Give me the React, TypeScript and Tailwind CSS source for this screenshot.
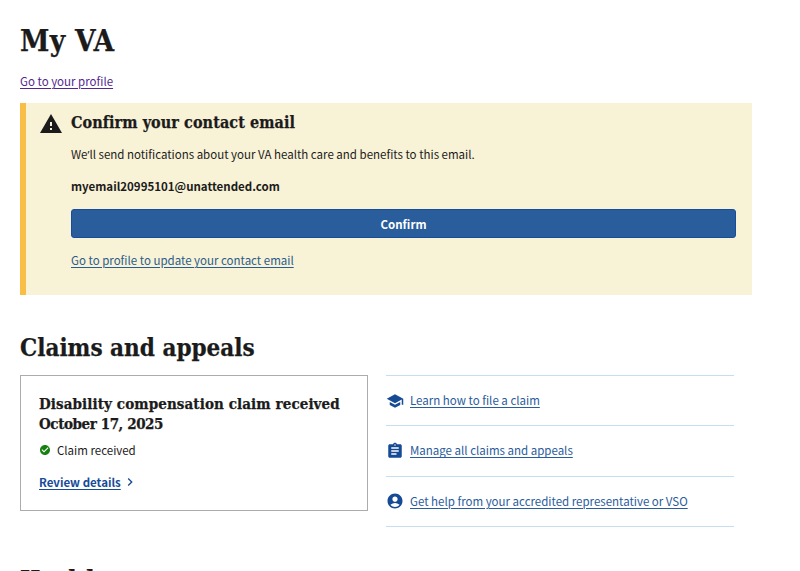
import React from "react";
import { MdAccountCircle, MdAssignment, MdCheckCircle, MdChevronRight, MdSchool, MdWarning } from "react-icons/md";

const serif = "font-['DejaVu_Serif_Condensed','DejaVu_Serif',serif] font-bold text-[#1b1b1b] whitespace-nowrap [-webkit-text-stroke:0.25px_#1b1b1b]";
const link = "underline decoration-1 underline-offset-2 whitespace-nowrap";

function Resource({ icon, children }: { icon: React.ReactNode; children: string }) {
  return (
    <li className="flex h-[50.3px] items-center border-b border-[#c3dff0] text-[#2a5c9c]">
      <span className="w-6 shrink-0 text-[#174a95]">{icon}</span>
      <a className={`${link} -mt-px`}>{children}</a>
    </li>
  );
}

export default function App() {
  return (
    <main className="h-[571px] overflow-hidden bg-white pl-5 pt-[21px] font-['Noto_Sans_CJK_SC',sans-serif] text-[11.5px] leading-5 text-[#1b1b1b]">
      <h1 className={`${serif} h-10 text-[29.5px] leading-10 tracking-[0.3px]`}><span>My VA</span></h1>
      <div className="mt-[10px] h-5 text-[#54278f]">
        <a className={link}>Go to your profile</a>
      </div>

      <section className="mt-[12px] flex h-[192px] w-[732px] border-l-[6px] border-[#f9be48] bg-[#f8f2d6] pl-[14px] pr-4 pt-[7px]">
        <MdWarning className="mt-[1.5px] size-6 shrink-0 -ml-px" />
        <div className="ml-2 flex-1">
          <h2 className={`${serif} h-[25px] text-[16px] leading-[25px] tracking-[0.08px]`}><span>Confirm your contact email</span></h2>
          <p className="mt-[9px] h-5 whitespace-nowrap"><span>We<span className="font-['Open_Sans',sans-serif]">’</span>ll send notifications about your VA health care and benefits to this email.</span></p>
          <p className="mt-3 font-bold"><span>myemail20995101@unattended.com</span></p>
          <button className="mt-[13px] flex h-[29px] w-full items-center justify-center rounded-[3px] border border-[#174e9c] bg-[#295d9c] font-bold text-white">
            <span>Confirm</span>
          </button>
          <div className="mt-3 text-[#2a5c8c]"><a className={link}>Go to profile to update your contact email</a></div>
        </div>
      </section>

      <h2 className={`${serif} mt-[35px] h-9 text-[24px] leading-9`}><span>Claims and appeals</span></h2>

      <div className="mt-[9px] flex">
        <article className="h-[136px] w-[348px] border border-[#aaacae] pl-[18px] pt-[18px]">
          <h3 className={`${serif} text-[15px] leading-5 tracking-[0.1px]`}>
            <span>Disability compensation claim received</span><br /><span className="tracking-[-0.42px]">October 17, 2025</span>
          </h3>
          <p className="mt-[6px] flex items-center">
            <MdCheckCircle className="mr-[6px] size-3 text-[#168011]" /><span>Claim received</span>
          </p>
          <p className="mt-3 flex items-center font-bold text-[#174b96]">
            <a className={link}>Review details</a><MdChevronRight className="ml-px size-4" />
          </p>
        </article>
        <ul className="ml-[18px] w-[347.5px] border-t border-[#c3dff0]">
          <Resource icon={<MdSchool className="size-[18px]" />}>Learn how to file a claim</Resource>
          <Resource icon={<MdAssignment className="size-[18px]" />}>Manage all claims and appeals</Resource>
          <Resource icon={<MdAccountCircle className="size-[18px]" />}>Get help from your accredited representative or VSO</Resource>
        </ul>
      </div>

      <h2 className={`${serif} mt-[35px] h-9 text-[24px] leading-9`}><span>Health care</span></h2>
    </main>
  );
}
